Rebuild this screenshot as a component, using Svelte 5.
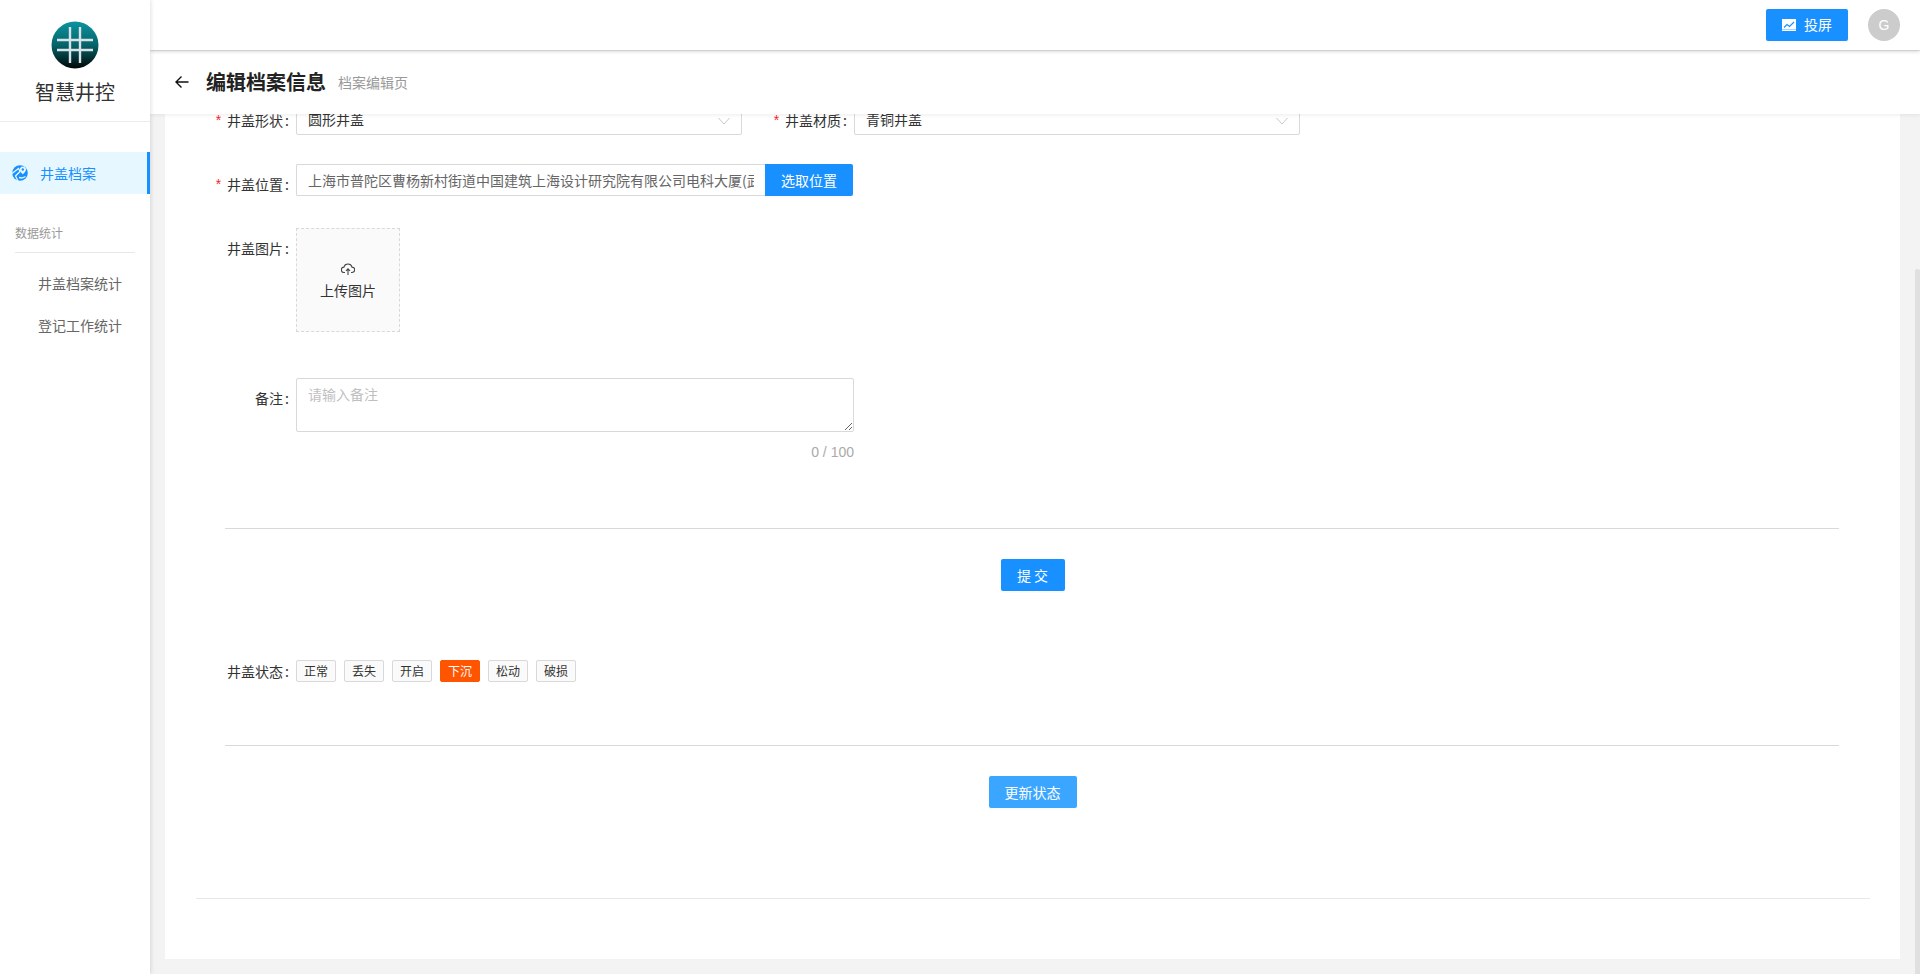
<script>
    import { onMount } from 'svelte'

    let scroller
    const statusTags = ['正常', '丢失', '开启', '下沉', '松动', '破损']
    const activeTag = '下沉'
    const address = '上海市普陀区曹杨新村街道中国建筑上海设计研究院有限公司电科大厦(武宁路)'

    onMount(() => {
        scroller.scrollTop = scroller.scrollHeight
    })
</script>

<div class="layout">
    <aside class="sidebar">
        <div class="brand">
            <svg class="logo" viewBox="0 0 48 48" width="48" height="48">
                <defs>
                    <linearGradient id="logoFill" x1="0" y1="0" x2="0" y2="1">
                        <stop offset="0" stop-color="#0b949f" />
                        <stop offset="0.5" stop-color="#05646a" />
                        <stop offset="1" stop-color="#000606" />
                    </linearGradient>
                </defs>
                <circle cx="24" cy="24" r="23.5" fill="url(#logoFill)" />
                <path d="M19 6v36M29 6v36M6 19h36M6 29h36" stroke="#d9e2e8" stroke-width="2.4" fill="none" />
            </svg>
            <div class="brand-name">智慧井控</div>
        </div>
        <nav class="menu">
            <div class="menu-item active">
                <svg viewBox="0 0 16 16" width="16" height="16">
                    <circle cx="8" cy="8" r="7.8" fill="#1890ff" />
                    <path d="M0 8.500 6.500 3.500 8 6.500 3.500 11 6 16M7 12.500l3 .5 3.500-1.500" stroke="#e6f7ff" stroke-width="1.300" fill="none" />
                    <path d="M10.800 1.500c2 0 3.200 1.400 3.200 2.900 0 1.500-1.600 3.300-3.200 4.900-1.400-1.600-3-3.400-3-4.900 0-1.500 1.200-2.900 3-2.900z" fill="#e6f7ff" />
                    <circle cx="10.800" cy="4.500" r="1.200" fill="#1890ff" />
                </svg>
                <span>井盖档案</span>
            </div>
            <div class="menu-group">数据统计</div>
            <div class="menu-sub">井盖档案统计</div>
            <div class="menu-sub">登记工作统计</div>
        </nav>
    </aside>

    <div class="main">
        <header class="topbar">
            <button class="btn cast">
                <svg viewBox="0 0 14 12" width="14" height="12">
                    <rect width="14" height="12" fill="#fff" />
                    <rect y="10" width="14" height="1" fill="#a8d5ff" />
                    <path d="M2 8.500 5 5.500 7.500 7.500 12 3" stroke="#1890ff" stroke-width="1.100" fill="none" />
                </svg>
                <span>投屏</span>
            </button>
            <div class="avatar">G</div>
        </header>

        <header class="page-head">
            <svg class="back" viewBox="0 0 14 14" width="14" height="14">
                <path d="M13.500 7H1M6.500 1.500 1 7l5.500 5.500" stroke="#111" stroke-width="1.400" fill="none" />
            </svg>
            <h1>编辑档案信息</h1>
            <span class="subtitle">档案编辑页</span>
        </header>

        <div class="scroller" bind:this={scroller}>
            <section class="card">
                <div class="form">
                    <div class="row first">
                        <label class="field-label required" for="shape">井盖形状<span class="colon">:</span></label>
                        <div class="select" id="shape">
                            <span>圆形井盖</span>
                            <svg viewBox="0 0 12 8" width="12" height="8"><path d="M.5 1 6 7l5.500-6" stroke="#c8c8c8" fill="none" /></svg>
                        </div>
                        <label class="field-label required second" for="material">井盖材质<span class="colon">:</span></label>
                        <div class="select" id="material">
                            <span>青铜井盖</span>
                            <svg viewBox="0 0 12 8" width="12" height="8"><path d="M.5 1 6 7l5.500-6" stroke="#c8c8c8" fill="none" /></svg>
                        </div>
                    </div>

                    <div class="row location">
                        <label class="field-label required" for="address">井盖位置<span class="colon">:</span></label>
                        <input id="address" class="address" type="text" value={address} />
                        <button class="btn pick">选取位置</button>
                    </div>

                    <div class="row upload-row">
                        <span class="field-label">井盖图片<span class="colon">:</span></span>
                        <div class="upload">
                            <svg viewBox="0 0 14 14" width="14" height="14">
                                <path d="M4 10.500H3.200A2.700 2.700 0 0 1 2.900 5.100 4.200 4.200 0 0 1 11 5.100a2.700 2.700 0 0 1 0 5.400H10" stroke="#444" stroke-width="1.100" fill="none" />
                                <path d="M7 13V7M5 8.800 7 6.800l2 2" stroke="#444" stroke-width="1.100" fill="none" />
                            </svg>
                            <span>上传图片</span>
                        </div>
                    </div>

                    <div class="row remark-row">
                        <label class="field-label" for="remark">备注<span class="colon">:</span></label>
                        <div class="remark">
                            <textarea id="remark" placeholder="请输入备注"></textarea>
                            <div class="count">0 / 100</div>
                        </div>
                    </div>

                    <hr class="divider" />

                    <div class="actions submit-actions">
                        <button class="btn submit">提 交</button>
                    </div>

                    <div class="row status-row">
                        <span class="field-label status-label">井盖状态<span class="colon">:</span></span>
                        <div class="tags">
                            {#each statusTags as tag}
                                <span class="tag" class:on={tag === activeTag}>{tag}</span>
                            {/each}
                        </div>
                    </div>

                    <hr class="divider" />

                    <div class="actions">
                        <button class="btn update">更新状态</button>
                    </div>
                </div>
                <hr class="foot-line" />
            </section>
        </div>
        <div class="scroll-thumb"></div>
    </div>
</div>

<style>
    :global(html), :global(body) {
        height: 974px;
        overflow: hidden;
    }

    :global(body) {
        margin: 0;
        background: #f3f3f3;
    }

    .layout {
        display: flex;
        height: 974px;
        overflow: hidden;
        font-family: 'Noto Sans CJK SC', 'Liberation Sans', sans-serif;
        font-size: 14px;
        color: #333;
    }

    .sidebar {
        position: relative;
        z-index: 3;
        flex: 0 0 150px;
        background: #fff;
        box-shadow: 1px 0 4px rgba(0, 0, 0, 0.12);
    }

    .brand {
        display: flex;
        flex-direction: column;
        align-items: center;
        height: 122px;
        padding-top: 21px;
        box-sizing: border-box;
        border-bottom: 1px solid #ececec;
    }

    .logo {
        display: block;
    }

    .brand-name {
        margin-top: 8px;
        font-size: 20px;
        line-height: 30px;
        color: #333;
    }

    .menu {
        padding-top: 30px;
    }

    .menu-item {
        display: flex;
        align-items: center;
        gap: 12px;
        height: 42px;
        padding-left: 12px;
        background: #e6f7ff;
        border-right: 3px solid #1890ff;
        color: #1890ff;
    }

    .menu-group {
        margin: 30px 15px 10px;
        padding-bottom: 10px;
        border-bottom: 1px solid #e8e8e8;
        font-size: 12px;
        line-height: 18px;
        color: #999;
    }

    .menu-sub {
        height: 42px;
        padding-left: 38px;
        line-height: 41px;
        color: #666;
    }

    .main {
        position: relative;
        flex: 1;
        min-width: 0;
        display: flex;
        flex-direction: column;
    }

    .topbar {
        position: relative;
        z-index: 2;
        display: flex;
        align-items: center;
        justify-content: flex-end;
        gap: 20px;
        flex: 0 0 50px;
        padding-right: 20px;
        background: #fff;
        box-shadow: 0 1px 4px rgba(0, 0, 0, 0.22);
    }

    .btn {
        border: none;
        border-radius: 2px;
        background: #1890ff;
        color: #fff;
        font-family: inherit;
        font-size: 14px;
        box-shadow: 0 2px 0 rgba(0, 0, 0, 0.015);
        cursor: pointer;
        padding: 0;
    }

    .cast {
        display: flex;
        align-items: center;
        justify-content: center;
        gap: 8px;
        width: 82px;
        height: 32px;
    }

    .cast span {
        margin-top: -2px;
    }

    .avatar {
        width: 32px;
        height: 32px;
        border-radius: 50%;
        background: #ccc;
        color: #fff;
        text-align: center;
        line-height: 32px;
        font-family: 'Liberation Sans', sans-serif;
    }

    .page-head {
        position: relative;
        z-index: 1;
        display: flex;
        align-items: center;
        flex: 0 0 63px;
        box-sizing: border-box;
        margin-top: 1px;
        padding: 0 0 2px 25px;
        background: #fff;
        box-shadow: 0 1px 4px rgba(0, 0, 0, 0.08);
    }

    .back {
        margin-right: 17px;
    }

    h1 {
        margin: 0 12px 0 0;
        font-size: 20px;
        font-weight: 600;
        color: #222;
    }

    .subtitle {
        color: #999;
    }

    .scroller {
        flex: 1;
        min-height: 0;
        overflow-y: scroll;
        scrollbar-width: none;
        padding: 15px 0;
        box-sizing: border-box;
    }

    .scroll-thumb {
        position: absolute;
        top: 269px;
        right: 0;
        bottom: 0;
        width: 5px;
        background: #e0e0e0;
        border-radius: 2px 2px 0 0;
    }

    .card {
        margin: 0 20px 0 15px;
        padding-top: 163px;
        padding-bottom: 60px;
        background: #fff;
    }

    .form {
        padding: 0 61px 0 60px;
    }

    .row {
        display: flex;
        align-items: flex-start;
    }

    .field-label {
        display: flex;
        justify-content: flex-end;
        flex: 0 0 64px;
        min-width: 0;
        margin-right: 7px;
        padding-top: 4px;
        line-height: 32px;
        white-space: nowrap;
        color: #333;
    }

    .colon {
        margin-left: 2px;
    }

    .first .field-label {
        padding-top: 1px;
    }

    .required::before {
        content: '*';
        margin-right: 6px;
        color: #f5222d;
        font-family: 'Liberation Sans', sans-serif;
    }

    .second {
        margin-left: 41px;
    }

    .select {
        display: flex;
        align-items: center;
        justify-content: space-between;
        box-sizing: border-box;
        width: 446px;
        height: 32px;
        padding: 0 11px;
        border: 1px solid #d9d9d9;
        border-radius: 2px;
    }

    .select svg {
        margin-top: 4px;
    }

    .location {
        margin-top: 28px;
    }

    .address {
        box-sizing: border-box;
        width: 469px;
        height: 32px;
        padding: 0 11px;
        border: 1px solid #d9d9d9;
        border-right: none;
        border-radius: 2px 0 0 2px;
        outline: none;
        font-family: inherit;
        font-size: 14px;
        color: #666;
    }

    .pick {
        width: 88px;
        height: 32px;
        border-radius: 0 2px 2px 0;
    }

    .upload-row {
        margin-top: 28px;
    }

    .upload {
        display: flex;
        flex-direction: column;
        align-items: center;
        box-sizing: border-box;
        width: 104px;
        height: 104px;
        padding-top: 33px;
        gap: 3px;
        border: 1px dashed #d9d9d9;
        background: #fafafa;
        line-height: 22px;
    }

    .remark-row {
        margin-top: 46px;
    }

    .remark {
        width: 558px;
    }

    textarea {
        display: block;
        box-sizing: border-box;
        width: 100%;
        height: 54px;
        padding: 4px 11px;
        border: 1px solid #d9d9d9;
        border-radius: 2px;
        outline: none;
        font-family: inherit;
        font-size: 14px;
        line-height: 22px;
        resize: vertical;
    }

    textarea::placeholder {
        color: #bfbfbf;
    }

    .count {
        margin-top: 9px;
        text-align: right;
        line-height: 22px;
        color: #aaa;
        font-family: 'Liberation Sans', sans-serif;
    }

    .divider {
        height: 1px;
        margin: 65px 0 0;
        border: none;
        background: #d9d9d9;
    }

    .actions {
        display: flex;
        justify-content: center;
        margin-top: 30px;
        padding-left: 1px;
    }

    .submit {
        width: 64px;
        height: 32px;
    }

    .update {
        width: 88px;
        height: 32px;
        background: #3ba6ff;
    }

    .status-row {
        align-items: center;
        margin-top: 64px;
    }

    .status-label {
        padding-top: 0;
    }

    .tags {
        display: flex;
        gap: 8px;
    }

    .tag {
        box-sizing: border-box;
        width: 40px;
        height: 22px;
        border: 1px solid #d9d9d9;
        border-radius: 2px;
        background: #fafafa;
        text-align: center;
        font-size: 12px;
        line-height: 20px;
        color: #333;
    }

    .tag.on {
        border-color: #ff5500;
        background: #ff5500;
        color: #fff;
    }

    .status-row + .divider {
        margin-top: 58px;
    }

    .foot-line {
        height: 1px;
        margin: 90px 30px 0 31px;
        border: none;
        background: #e8e8e8;
    }
</style>
